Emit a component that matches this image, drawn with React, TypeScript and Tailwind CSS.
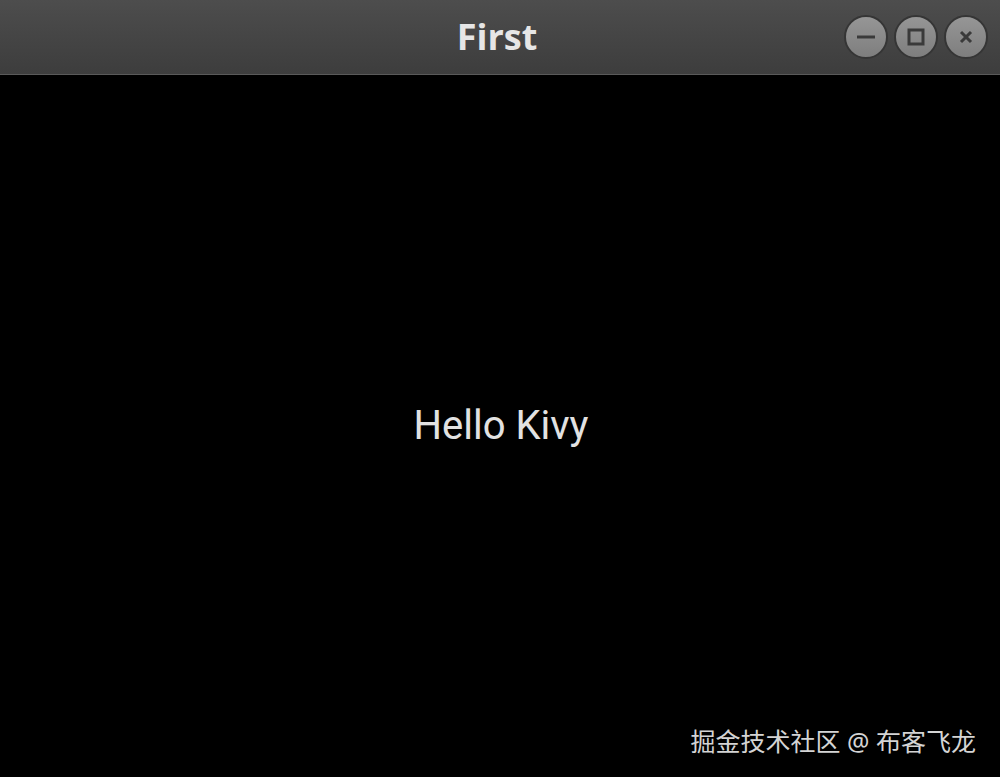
import React from 'react';

const TitleButton: React.FC<{ kind: 'min' | 'max' | 'close' }> = ({ kind }) => (
  <div className="w-[44px] h-[44px] rounded-full bg-gradient-to-b from-[#969696] to-[#7e7e7e] border-2 border-[#353535] flex items-center justify-center">
    <svg width="24" height="24" viewBox="0 0 24 24" fill="none" stroke="#3a3a3a" strokeWidth="3">
      {kind === 'min' && <line x1="3" y1="12" x2="21" y2="12" />}
      {kind === 'max' && <rect x="5" y="5" width="14" height="14" />}
      {kind === 'close' && (
        <>
          <line x1="7" y1="7" x2="17" y2="17" />
          <line x1="17" y1="7" x2="7" y2="17" />
        </>
      )}
    </svg>
  </div>
);

const App: React.FC = () => {
  return (
    <div className="w-[1000px] h-[777px] flex flex-col bg-black overflow-hidden">
      <div className="relative h-[75px] shrink-0 bg-gradient-to-b from-[#4d4d4d] to-[#3d3d3d] border-b border-[#5a5a5a] flex items-center justify-center">
        <span className="text-[36px] font-bold text-[#e6e6e6] leading-none pr-[6px]" style={{ fontFamily: '"Open Sans", "Noto Sans", sans-serif' }}>
          First
        </span>
        <div className="absolute right-[12px] top-[15px] flex gap-[6px]">
          <TitleButton kind="min" />
          <TitleButton kind="max" />
          <TitleButton kind="close" />
        </div>
      </div>
      <div className="relative flex-1 flex items-center justify-center">
        <span className="text-[40px] text-[#e2e2e2] leading-none mt-[-1px] pl-[2px]" style={{ fontFamily: 'Roboto, "Liberation Sans", sans-serif' }}>
          Hello Kivy
        </span>
        <span className="absolute right-[24px] bottom-[23px] text-[25px] text-[#d4d4d4] leading-none" style={{ fontFamily: '"Noto Sans", "Noto Sans CJK SC", sans-serif' }}>
          掘金技术社区 @ 布客飞龙
        </span>
      </div>
    </div>
  );
};

export default App;
